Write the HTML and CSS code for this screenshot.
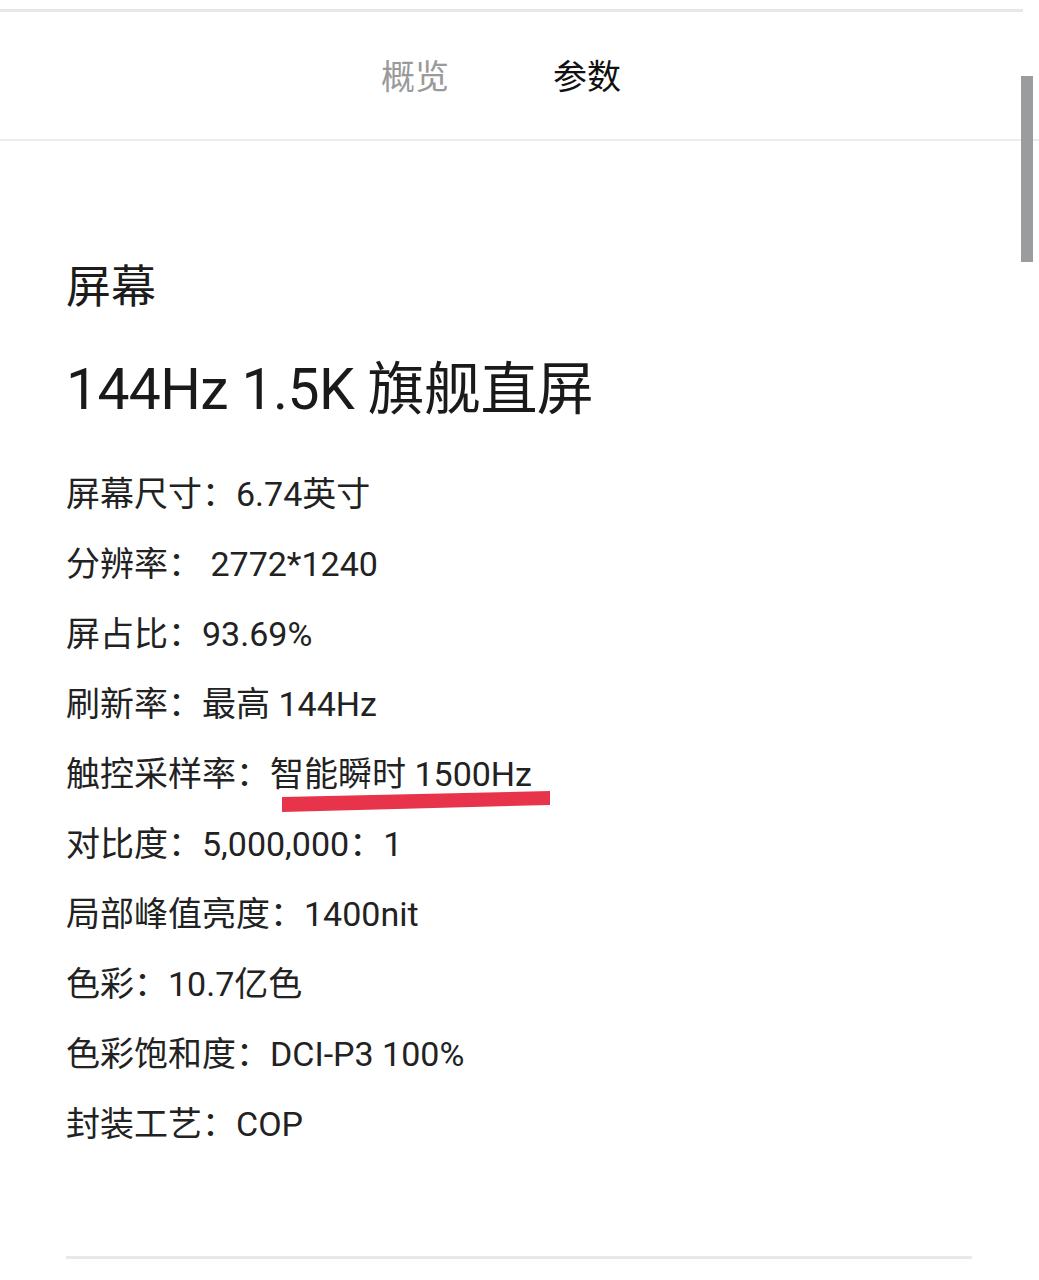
FILE: index.html
```html
<!DOCTYPE html>
<html lang="zh-CN">
<head>
<meta charset="utf-8">
<link rel="stylesheet" href="styles.css">
</head>
<body>
<div class="page">
  <div class="top-rule"></div>
  <nav class="tabs">
    <span class="tab">概览</span>
    <span class="tab active">参数</span>
  </nav>
  <div class="tab-rule"></div>
  <main class="content">
    <h2 class="section">屏幕</h2>
    <h1 class="headline">144Hz 1.5K 旗舰直屏</h1>
    <ul class="specs">
      <li>屏幕尺寸：6.74英寸</li>
      <li>分辨率：&nbsp;2772*1240</li>
      <li>屏占比：93.69%</li>
      <li>刷新率：最高 144Hz</li>
      <li>触控采样率：智能瞬时 1500Hz</li>
      <li>对比度：5,000,000：1</li>
      <li>局部峰值亮度：1400nit</li>
      <li>色彩：10.7亿色</li>
      <li>色彩饱和度：DCI-P3 100%</li>
      <li>封装工艺：COP</li>
    </ul>
    <div class="end-rule"></div>
  </main>
  <div class="scrollbar"></div>
  <svg class="pen" width="280" height="32" viewBox="0 0 280 32"><path d="M0 14 L268 8 L268 22 L0 29 Z" fill="#e8344a"/></svg>
</div>
</body>
</html>
```
FILE: styles.css
```css
html, body {
  margin: 0;
  padding: 0;
  background: #ffffff;
}
.page {
  position: relative;
  width: 1039px;
  height: 1280px;
  overflow: hidden;
  font-family: Roboto, "Noto Sans CJK SC", sans-serif;
  color: #1c1c1c;
}
.top-rule {
  margin-top: 9px;
  width: 1023px;
  height: 3px;
  background: #e8e8e8;
}
.tabs {
  display: flex;
  gap: 104px;
  padding-left: 381px;
  height: 127px;
  align-items: center;
  box-sizing: border-box;
  padding-top: 2px;
}
.tab {
  font-size: 34px;
  line-height: 40px;
  color: #9a9a9a;
}
.tab.active {
  color: #111;
}
.tab-rule {
  height: 2px;
  background: #ececec;
}
.content {
  padding-left: 66px;
  padding-top: 117px;
}
.section {
  margin: 0;
  font-size: 45px;
  font-weight: 400;
  line-height: 60px;
}
.headline {
  margin: 37px 0 0;
  font-size: 57px;
  font-weight: 400;
  line-height: 70px;
  letter-spacing: -0.6px;
  color: #1a1a1a;
}
.specs {
  list-style: none;
  margin: 34px 0 0;
  padding: 0;
}
.specs li {
  font-size: 34px;
  line-height: 70px;
  height: 70px;
  color: #222;
  white-space: nowrap;
}
.end-rule {
  margin-top: 97px;
  width: 906px;
  height: 3px;
  background: #e8e8e8;
}
.scrollbar {
  position: absolute;
  left: 1021px;
  top: 76px;
  width: 12px;
  height: 186px;
  background: #9a9c9e;
}
.pen {
  position: absolute;
  left: 282px;
  top: 783px;
}
```
